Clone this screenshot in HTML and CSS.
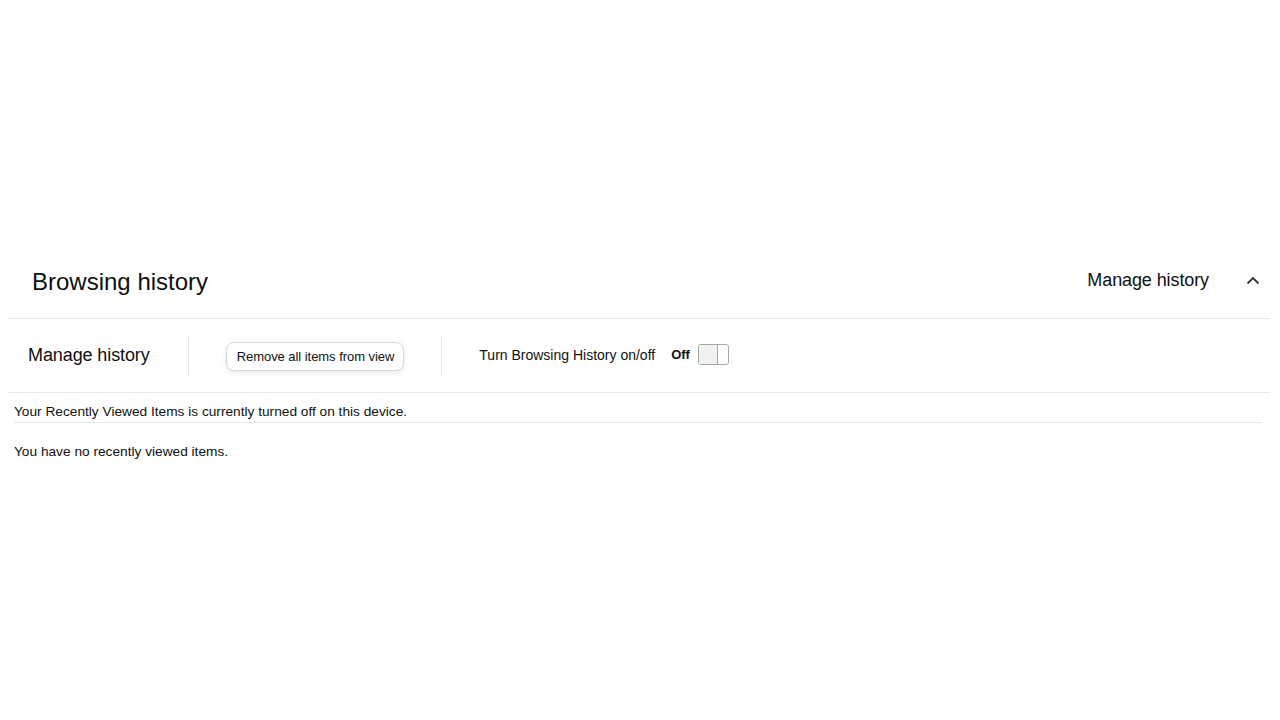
FILE: index.html
```html
<!DOCTYPE html>
<html lang="en">
<head>
    <meta charset="UTF-8">
    <meta name="viewport" content="width=device-width, initial-scale=1.0">
    <title>Browsing history</title>
    <link rel="stylesheet" href="styles.css">
</head>
<body>

    <section class="history">
        <header class="history-header">
            <h1>Browsing history</h1>
            <div class="header-right">
                <span class="manage-link">Manage history</span>
                <svg class="chevron" width="14" height="9" viewBox="0 0 14 9">
                    <path d="M1.5 7.5 L7 2 L12.5 7.5" fill="none" stroke="#333" stroke-width="1.8"/>
                </svg>
            </div>
        </header>

        <div class="controls">
            <span class="controls-title">Manage history</span>
            <span class="divider"></span>
            <button class="remove-btn">Remove all items from view</button>
            <span class="divider"></span>
            <span class="toggle-label">Turn Browsing History on/off</span>
            <span class="toggle-state">Off</span>
            <span class="toggle"><span class="knob"></span></span>
        </div>

        <div class="messages">
            <p class="notice">Your Recently Viewed Items is currently turned off on this device.</p>
            <p class="empty">You have no recently viewed items.</p>
        </div>
    </section>

</body>
</html>
```

FILE: styles.css
```css
* {
    margin: 0;
    padding: 0;
    box-sizing: border-box;
}

body {
    font-family: 'Liberation Sans', Arial, sans-serif;
    background-color: #ffffff;
    color: #0f1111;
}

/* Section wrapper */
.history {
    margin: 267px 10px 0 8px;
}

/* Header */
.history-header {
    display: flex;
    justify-content: space-between;
    align-items: center;
    padding: 0 10px 21px 24px;
    border-bottom: 1px solid #e7e7e7;
}

.history-header h1 {
    font-size: 24px;
    font-weight: normal;
    line-height: 30px;
}

.header-right {
    display: flex;
    align-items: center;
    gap: 37px;
    margin-top: -4px;
}

.manage-link {
    font-size: 18px;
    line-height: 24px;
    letter-spacing: -0.1px;
}

.chevron {
    display: block;
}

/* Controls row */
.controls {
    display: flex;
    align-items: center;
    gap: 37px;
    height: 74px;
    padding-left: 20px;
    border-bottom: 1px solid #e7e7e7;
}

.controls-title {
    font-size: 18px;
    letter-spacing: -0.1px;
    margin-right: 1px;
}

.divider {
    width: 1px;
    height: 38px;
    background: #e3e6e6;
}

.remove-btn {
    font-family: inherit;
    font-size: 13px;
    color: #0f1111;
    background: #ffffff;
    border: 1px solid #d5d9d9;
    border-radius: 8px;
    box-shadow: 0 2px 5px rgba(213, 217, 217, 0.5);
    height: 29px;
    padding: 0 9px 0 10px;
    margin-top: 1px;
    letter-spacing: -0.05px;
}

.toggle-label {
    font-size: 14px;
    margin-right: -21px;
    margin-top: -2px;
}

.toggle-state {
    font-size: 13px;
    font-weight: bold;
    margin-right: -29px;
    margin-top: -2px;
}

.toggle {
    display: flex;
    width: 31px;
    height: 21px;
    border: 1px solid #a6a6a6;
    border-radius: 3px;
    background: #ffffff;
    overflow: hidden;
    margin-top: -2px;
}

.knob {
    width: 19px;
    height: 100%;
    background: #f0f2f2;
    border-right: 1px solid #a6a6a6;
}

/* Messages */
.messages {
    padding: 0 8px 0 6px;
}

.notice {
    font-size: 13.7px;
    line-height: 17px;
    padding: 10px 0 2px;
    border-bottom: 1px solid #e7e7e7;
}

.empty {
    font-size: 13.7px;
    line-height: 17px;
    padding-top: 20px;
}
```
